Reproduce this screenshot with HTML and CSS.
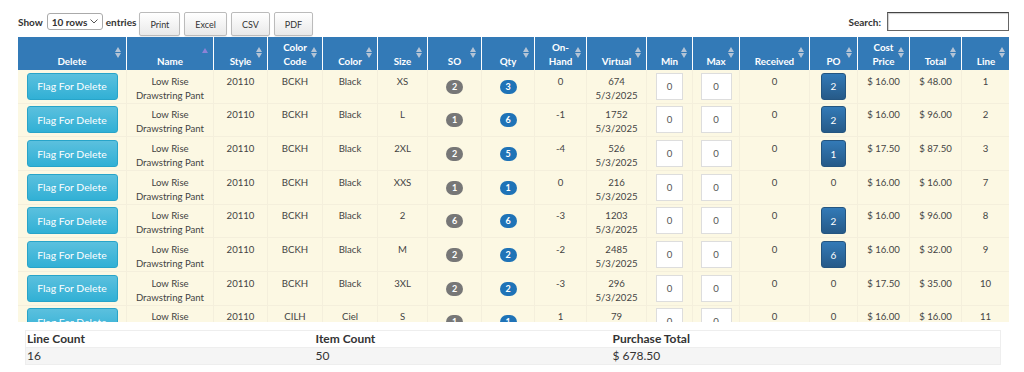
FILE: index.html
```html
<!DOCTYPE html>
<html lang="en">
<head>
  <meta charset="UTF-8">
  <title>Purchase Order Lines</title>
  <link rel="stylesheet" href="styles.css">
</head>
<body>
  <div class="page">
    <!-- Toolbar: length menu, export buttons, search -->
    <div class="toolbar">
      <label class="length">Show
        <span class="select">10 rows
          <svg width="8" height="5" viewBox="0 0 8 5"><path d="M0.5 0.5 L4 4 L7.5 0.5" fill="none" stroke="#555" stroke-width="1"/></svg>
        </span>
        entries</label>
      <div class="export">
        <button class="dt-button">Print</button>
        <button class="dt-button">Excel</button>
        <button class="dt-button">CSV</button>
        <button class="dt-button">PDF</button>
      </div>
      <label class="search">Search: <input type="text" class="search-box"></label>
    </div>

    <!-- Scrolling order lines -->
    <div class="scroll">
      <table class="lines">
        <colgroup>
          <col style="width:109px"><col style="width:87px"><col style="width:54px"><col style="width:55px">
          <col style="width:55px"><col style="width:50px"><col style="width:54px"><col style="width:53px">
          <col style="width:52px"><col style="width:60px"><col style="width:46px"><col style="width:47px">
          <col style="width:70px"><col style="width:48px"><col style="width:52px"><col style="width:52px">
          <col style="width:48px">
        </colgroup>
        <thead>
          <tr>
            <th class="sort">Delete</th>
            <th class="sort-asc">Name</th>
            <th class="sort">Style</th>
            <th class="sort">Color<br>Code</th>
            <th class="sort">Color</th>
            <th class="sort">Size</th>
            <th class="sort">SO</th>
            <th class="sort">Qty</th>
            <th class="sort">On-<br>Hand</th>
            <th class="sort">Virtual</th>
            <th class="sort">Min</th>
            <th class="sort">Max</th>
            <th class="sort">Received</th>
            <th class="sort">PO</th>
            <th class="sort">Cost<br>Price</th>
            <th class="sort">Total</th>
            <th class="sort">Line</th>
          </tr>
        </thead>
        <tbody>
          <tr>
            <td class="ctl"><button class="btn-flag">Flag For Delete</button></td>
            <td>Low Rise<br>Drawstring Pant</td><td>20110</td><td>BCKH</td><td>Black</td><td>XS</td>
            <td class="ctl"><span class="badge">2</span></td>
            <td class="ctl"><span class="badge blue">3</span></td>
            <td>0</td><td>674<br>5/3/2025</td>
            <td class="ctl"><input class="qty-in" value="0"></td>
            <td class="ctl"><input class="qty-in wide" value="0"></td>
            <td>0</td>
            <td class="ctl"><button class="btn-po">2</button></td>
            <td>$ 16.00</td><td>$ 48.00</td><td>1</td>
          </tr>
          <tr>
            <td class="ctl"><button class="btn-flag">Flag For Delete</button></td>
            <td>Low Rise<br>Drawstring Pant</td><td>20110</td><td>BCKH</td><td>Black</td><td>L</td>
            <td class="ctl"><span class="badge">1</span></td>
            <td class="ctl"><span class="badge blue">6</span></td>
            <td>-1</td><td>1752<br>5/3/2025</td>
            <td class="ctl"><input class="qty-in" value="0"></td>
            <td class="ctl"><input class="qty-in wide" value="0"></td>
            <td>0</td>
            <td class="ctl"><button class="btn-po">2</button></td>
            <td>$ 16.00</td><td>$ 96.00</td><td>2</td>
          </tr>
          <tr>
            <td class="ctl"><button class="btn-flag">Flag For Delete</button></td>
            <td>Low Rise<br>Drawstring Pant</td><td>20110</td><td>BCKH</td><td>Black</td><td>2XL</td>
            <td class="ctl"><span class="badge">2</span></td>
            <td class="ctl"><span class="badge blue">5</span></td>
            <td>-4</td><td>526<br>5/3/2025</td>
            <td class="ctl"><input class="qty-in" value="0"></td>
            <td class="ctl"><input class="qty-in wide" value="0"></td>
            <td>0</td>
            <td class="ctl"><button class="btn-po">1</button></td>
            <td>$ 17.50</td><td>$ 87.50</td><td>3</td>
          </tr>
          <tr>
            <td class="ctl"><button class="btn-flag">Flag For Delete</button></td>
            <td>Low Rise<br>Drawstring Pant</td><td>20110</td><td>BCKH</td><td>Black</td><td>XXS</td>
            <td class="ctl"><span class="badge">1</span></td>
            <td class="ctl"><span class="badge blue">1</span></td>
            <td>0</td><td>216<br>5/3/2025</td>
            <td class="ctl"><input class="qty-in" value="0"></td>
            <td class="ctl"><input class="qty-in wide" value="0"></td>
            <td>0</td><td>0</td>
            <td>$ 16.00</td><td>$ 16.00</td><td>7</td>
          </tr>
          <tr>
            <td class="ctl"><button class="btn-flag">Flag For Delete</button></td>
            <td>Low Rise<br>Drawstring Pant</td><td>20110</td><td>BCKH</td><td>Black</td><td>2</td>
            <td class="ctl"><span class="badge">6</span></td>
            <td class="ctl"><span class="badge blue">6</span></td>
            <td>-3</td><td>1203<br>5/3/2025</td>
            <td class="ctl"><input class="qty-in" value="0"></td>
            <td class="ctl"><input class="qty-in wide" value="0"></td>
            <td>0</td>
            <td class="ctl"><button class="btn-po">2</button></td>
            <td>$ 16.00</td><td>$ 96.00</td><td>8</td>
          </tr>
          <tr>
            <td class="ctl"><button class="btn-flag">Flag For Delete</button></td>
            <td>Low Rise<br>Drawstring Pant</td><td>20110</td><td>BCKH</td><td>Black</td><td>M</td>
            <td class="ctl"><span class="badge">2</span></td>
            <td class="ctl"><span class="badge blue">2</span></td>
            <td>-2</td><td>2485<br>5/3/2025</td>
            <td class="ctl"><input class="qty-in" value="0"></td>
            <td class="ctl"><input class="qty-in wide" value="0"></td>
            <td>0</td>
            <td class="ctl"><button class="btn-po">6</button></td>
            <td>$ 16.00</td><td>$ 32.00</td><td>9</td>
          </tr>
          <tr>
            <td class="ctl"><button class="btn-flag">Flag For Delete</button></td>
            <td>Low Rise<br>Drawstring Pant</td><td>20110</td><td>BCKH</td><td>Black</td><td>3XL</td>
            <td class="ctl"><span class="badge">2</span></td>
            <td class="ctl"><span class="badge blue">2</span></td>
            <td>-3</td><td>296<br>5/3/2025</td>
            <td class="ctl"><input class="qty-in" value="0"></td>
            <td class="ctl"><input class="qty-in wide" value="0"></td>
            <td>0</td><td>0</td>
            <td>$ 17.50</td><td>$ 35.00</td><td>10</td>
          </tr>
          <tr>
            <td class="ctl"><button class="btn-flag">Flag For Delete</button></td>
            <td>Low Rise<br>Drawstring Pant</td><td>20110</td><td>CILH</td><td>Ciel</td><td>S</td>
            <td class="ctl"><span class="badge">1</span></td>
            <td class="ctl"><span class="badge blue">1</span></td>
            <td>1</td><td>79<br>5/3/2025</td>
            <td class="ctl"><input class="qty-in" value="0"></td>
            <td class="ctl"><input class="qty-in wide" value="0"></td>
            <td>0</td><td>0</td>
            <td>$ 16.00</td><td>$ 16.00</td><td>11</td>
          </tr>
        </tbody>
      </table>
    </div>

    <!-- Order summary -->
    <table class="summary">
      <tr><th>Line Count</th><th>Item Count</th><th>Purchase Total</th></tr>
      <tr><td>16</td><td>50</td><td>$ 678.50</td></tr>
    </table>
  </div>
</body>
</html>
```

FILE: styles.css
```css
/* General page styling */
* {
  box-sizing: border-box;
}

body {
  margin: 0;
  font-family: "Source Sans Pro", Lato, "Open Sans", sans-serif;
  color: #333;
  background: #fff;
}

.page {
  padding: 12px 15px 0 18px;
}

/* Toolbar above the table */
.toolbar {
  display: flex;
  align-items: flex-start;
  height: 25px;
}

.length {
  display: flex;
  align-items: center;
  gap: 3px;
  height: 17px;
  margin-top: 1px;
  font-size: 10px;
  font-weight: bold;
  color: #333;
  white-space: nowrap;
}

.select {
  display: inline-flex;
  align-items: center;
  justify-content: space-between;
  width: 56px;
  height: 17px;
  margin-left: 1px;
  padding: 0 4px 0 4px;
  border: 1px solid #aaa;
  border-radius: 3px;
  font-weight: bold;
  background: #fff;
}

.export {
  display: flex;
  gap: 4px;
  margin-left: 3px;
}

.dt-button {
  height: 24px;
  padding: 0 10px;
  font-family: inherit;
  font-size: 9px;
  color: #333;
  border: 1px solid #bbb;
  border-radius: 2px;
  background: linear-gradient(#fff, #e9e9e9);
  box-shadow: 0 1px 1px rgba(0, 0, 0, 0.08);
}

.search {
  margin-left: auto;
  display: flex;
  align-items: center;
  gap: 6px;
  height: 19px;
  font-size: 10px;
  font-weight: bold;
}

.search-box {
  width: 122px;
  height: 19px;
  border: 1px solid #666;
  border-top-color: #444;
  box-shadow: inset 1px 1px 1px rgba(0, 0, 0, 0.2);
}

.scroll {
  width: 991px;
  height: 285px;
  overflow: hidden;
}

.lines {
  width: 991px;
  table-layout: fixed;
  border-collapse: separate;
  border-spacing: 0;
  font-size: 9.6px;
}

.lines th {
  position: relative;
  height: 33px;
  padding: 0 3px 2px;
  vertical-align: bottom;
  text-align: center;
  line-height: 14px;
  font-size: 9.8px;
  font-weight: bold;
  color: #fff;
  background: #337ab7;
  border-right: 1px solid #fff;
}

.lines th:last-child {
  border-right: none;
}

/* Sort arrows in the header */
.lines th.sort::before,
.lines th.sort::after,
.lines th.sort-asc::before {
  content: "";
  position: absolute;
  right: 5px;
  border-left: 3.5px solid transparent;
  border-right: 3.5px solid transparent;
}

.lines th.sort::before {
  top: 10px;
  border-bottom: 5px solid #b4c4d6;
}

.lines th.sort::after {
  top: 16px;
  border-top: 5px solid #b4c4d6;
}

.lines th.sort-asc::before {
  top: 11px;
  border-bottom: 5px solid #8d82d6;
}

.lines tbody tr {
  height: 33.67px;
}

.lines td {
  padding: 4.67px 2px 0;
  vertical-align: top;
  text-align: center;
  line-height: 14px;
  color: #444;
  background: #fcf8e3;
  border-right: 1px solid #f4efdc;
  border-bottom: 1px solid #f4efdc;
}

.lines td.ctl {
  padding: 0;
  vertical-align: middle;
}

/* Row controls */
.btn-flag {
  width: 91px;
  height: 27px;
  padding: 0;
  font-family: inherit;
  font-size: 10.4px;
  color: #fff;
  border: 1px solid #28a4c9;
  border-radius: 3px;
  background: linear-gradient(#5bc0de, #31b0d5);
  vertical-align: middle;
}

.badge {
  display: inline-block;
  min-width: 17px;
  height: 14px;
  padding: 0 4px;
  border-radius: 7px;
  font-size: 9px;
  font-weight: bold;
  line-height: 14px;
  color: #fff;
  background: #777;
  vertical-align: middle;
}

.badge.blue {
  background: #1f73b7;
}

.qty-in {
  width: 27px;
  height: 27px;
  padding: 0;
  font-family: inherit;
  font-size: 9.6px;
  text-align: center;
  color: #555;
  border: 1px solid #ddd;
  background: #fff;
  vertical-align: middle;
}

.qty-in.wide {
  width: 31px;
}

.btn-po {
  width: 25px;
  height: 27px;
  padding: 0;
  font-family: inherit;
  font-size: 10px;
  color: #fff;
  border: 1px solid #245580;
  border-radius: 3px;
  background: linear-gradient(#337ab7, #265a88);
  vertical-align: middle;
}

/* Summary table */
.summary {
  width: 976px;
  margin: 8px 0 0 7px;
  border-collapse: collapse;
  border: 1px solid #eee;
  font-size: 12px;
  line-height: 16px;
  text-align: left;
}

.summary th,
.summary td {
  padding: 0 1px;
  height: 17px;
}

.summary th {
  font-weight: bold;
  color: #333;
}

.summary th:nth-child(1) { width: 289px; }
.summary th:nth-child(2) { width: 297px; }

.summary td {
  background: #f5f5f5;
  border-top: 1px solid #eee;
}
```
